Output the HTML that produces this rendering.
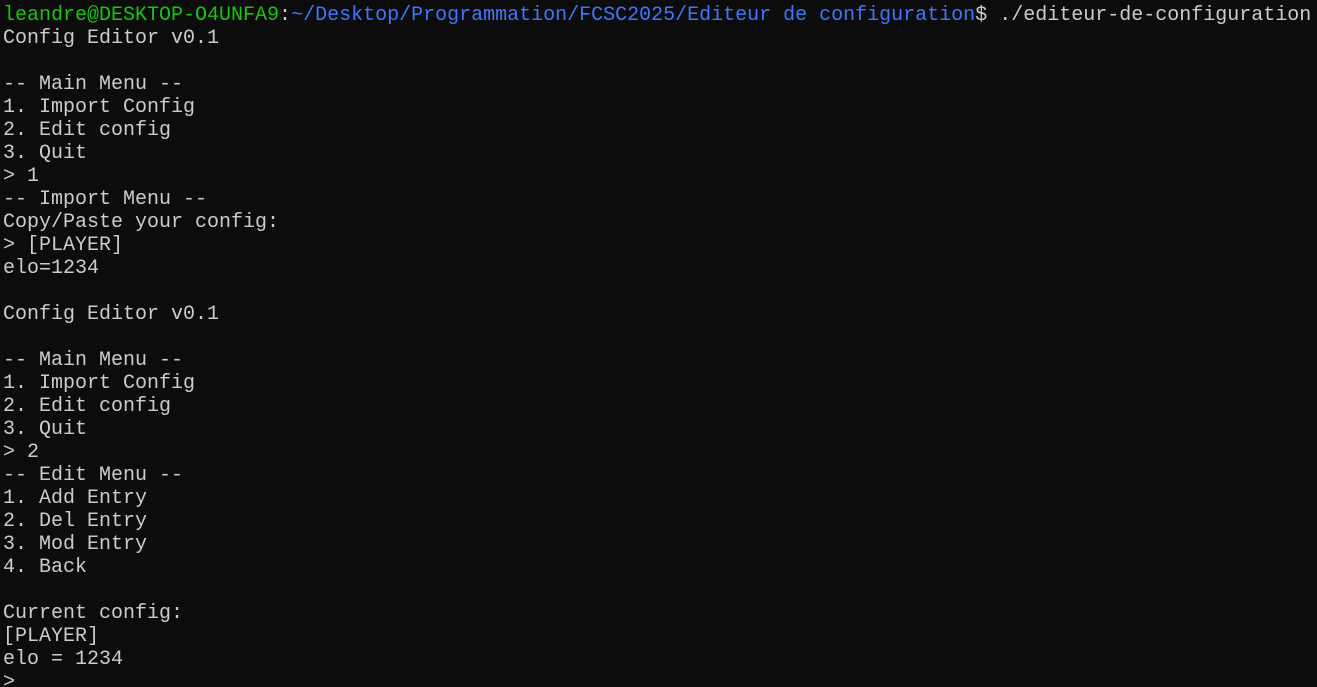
<!DOCTYPE html>
<html><head><meta charset="utf-8"><style>
html,body{margin:0;padding:0;background:#0c0c0c;width:1317px;height:687px;overflow:hidden}
pre{margin:0;padding:4px 0 0 3px;font-family:"Liberation Mono",monospace;font-size:20px;line-height:23px;color:#cccccc;white-space:pre}
.g{color:#16c60c}.b{color:#3b78ff}
</style></head><body><pre><span class="g">leandre@DESKTOP-O4UNFA9</span>:<span class="b">~/Desktop/Programmation/FCSC2025/Editeur de configuration</span>$ ./editeur-de-configuration
Config Editor v0.1

-- Main Menu --
1. Import Config
2. Edit config
3. Quit
&gt; 1
-- Import Menu --
Copy/Paste your config:
&gt; [PLAYER]
elo=1234

Config Editor v0.1

-- Main Menu --
1. Import Config
2. Edit config
3. Quit
&gt; 2
-- Edit Menu --
1. Add Entry
2. Del Entry
3. Mod Entry
4. Back

Current config:
[PLAYER]
elo = 1234
&gt;</pre></body></html>
